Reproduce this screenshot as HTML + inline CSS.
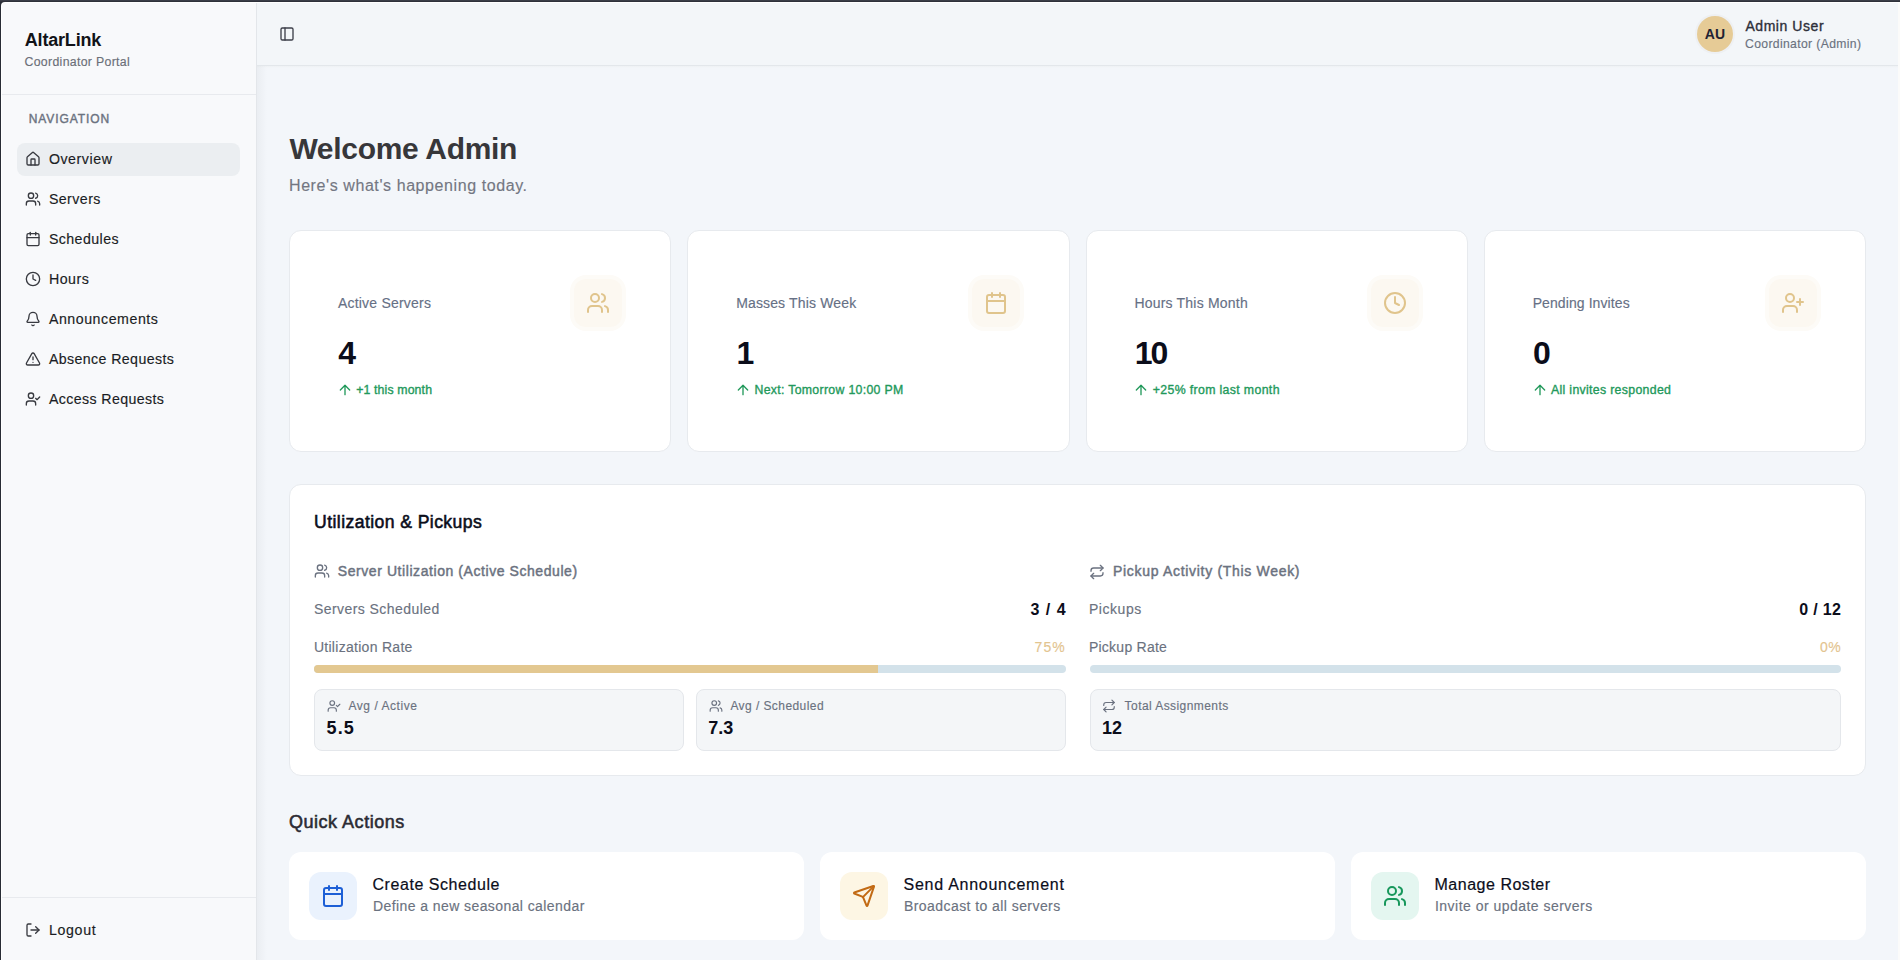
<!DOCTYPE html>
<html><head><meta charset="utf-8">
<style>
*{box-sizing:border-box;margin:0;padding:0}
html,body{width:1900px;height:960px;overflow:hidden;background:#2b2f37;font-family:"Liberation Sans",sans-serif;position:relative}
.b{position:absolute}
svg{position:absolute;fill:none;stroke:currentColor;stroke-width:2;stroke-linecap:round;stroke-linejoin:round;overflow:visible}
.t{position:absolute;white-space:nowrap;line-height:1}
.card{position:absolute;background:#fff;border:1px solid #e7eaee;border-radius:12px}
.sb{position:absolute;background:#f4f6f8;border:1px solid #e4e7eb;border-radius:8px;top:689px;height:62px}
.ib{position:absolute;width:48px;height:48px;border-radius:12px;top:279px;background:#fcf8f1;box-shadow:0 0 0 4px #fdfbf7}
.qa{position:absolute;background:#fff;border-radius:12px;top:852px;width:515px;height:88px}
.qib{position:absolute;width:48px;height:48px;border-radius:12px;top:872px}
.bar{position:absolute;height:8px;border-radius:4px;top:665px;background:#d3e2ea}
</style></head><body>
<!-- frame -->
<div class="b" style="left:0;top:0;width:1900px;height:1px;background:#3a3d47"></div>
<div class="b" style="left:0;top:1px;width:1900px;height:1px;background:#2e313a"></div>
<div class="b" style="left:0;top:2px;width:1px;height:958px;background:#282c35"></div>
<div class="b" style="left:1px;top:2px;width:1899px;height:958px;background:#fff;border-top-left-radius:4px"></div>
<div class="b" style="left:2px;top:3px;width:254px;height:957px;background:#f8f9fb;border-top-left-radius:3px"></div>
<div class="b" style="left:256px;top:3px;width:1px;height:957px;background:#e3e6ea"></div>
<div class="b" style="left:257px;top:3px;width:1641px;height:957px;background:#f3f6fa"></div>
<div class="b" style="left:257px;top:3px;width:1641px;height:62px;background:#f3f6f9"></div>
<div class="b" style="left:257px;top:65px;width:1641px;height:1px;background:#e3e7eb"></div>
<div class="b" style="left:257px;top:66px;width:1641px;height:2px;background:linear-gradient(#eef1f4,#f3f6fa)"></div>
<div class="b" style="left:257px;top:66px;width:10px;height:894px;background:linear-gradient(90deg,rgba(40,50,60,0.045),rgba(40,50,60,0))"></div>
<div class="b" style="left:1898px;top:3px;width:2px;height:957px;background:#fbfbfa"></div>

<!-- sidebar -->
<div class="b" style="left:2px;top:94px;width:254px;height:1px;background:#e8eaee"></div>
<div class="b" style="left:2px;top:897px;width:254px;height:1px;background:#e8eaee"></div>
<div class="b" style="left:17px;top:143px;width:223px;height:33px;border-radius:8px;background:#ebeef1"></div>
<div style="color:#383a40">
<svg style="left:24.5px;top:150.5px" width="16" height="16" viewBox="0 0 24 24"><path d="M15 21v-8a1 1 0 0 0-1-1h-4a1 1 0 0 0-1 1v8"/><path d="M3 10a2 2 0 0 1 .709-1.528l7-5.999a2 2 0 0 1 2.582 0l7 5.999A2 2 0 0 1 21 10v9a2 2 0 0 1-2 2H5a2 2 0 0 1-2-2z"/></svg>
<svg style="left:24.5px;top:190.5px" width="16" height="16" viewBox="0 0 24 24"><path d="M16 21v-2a4 4 0 0 0-4-4H6a4 4 0 0 0-4 4v2"/><circle cx="9" cy="7" r="4"/><path d="M22 21v-2a4 4 0 0 0-3-3.87"/><path d="M16 3.13a4 4 0 0 1 0 7.75"/></svg>
<svg style="left:24.5px;top:230.5px" width="16" height="16" viewBox="0 0 24 24"><path d="M8 2v4"/><path d="M16 2v4"/><rect width="18" height="18" x="3" y="4" rx="2"/><path d="M3 10h18"/></svg>
<svg style="left:24.5px;top:270.5px" width="16" height="16" viewBox="0 0 24 24"><circle cx="12" cy="12" r="10"/><polyline points="12 6 12 12 16 14"/></svg>
<svg style="left:24.5px;top:310.5px" width="16" height="16" viewBox="0 0 24 24"><path d="M10.268 21a2 2 0 0 0 3.464 0"/><path d="M3.262 15.326A1 1 0 0 0 4 17h16a1 1 0 0 0 .74-1.673C19.41 13.956 18 12.499 18 8A6 6 0 0 0 6 8c0 4.499-1.411 5.956-2.738 7.326"/></svg>
<svg style="left:24.5px;top:350.5px" width="16" height="16" viewBox="0 0 24 24"><path d="m21.73 18-8-14a2 2 0 0 0-3.48 0l-8 14A2 2 0 0 0 4 21h16a2 2 0 0 0 1.73-3"/><path d="M12 9v4"/><path d="M12 17h.01"/></svg>
<svg style="left:24.5px;top:390.5px" width="16" height="16" viewBox="0 0 24 24"><path d="m16 11 2 2 4-4"/><path d="M16 21v-2a4 4 0 0 0-4-4H6a4 4 0 0 0-4 4v2"/><circle cx="9" cy="7" r="4"/></svg>
<svg style="left:24.7px;top:921.7px" width="16" height="16" viewBox="0 0 24 24"><path d="m16 17 5-5-5-5"/><path d="M21 12H9"/><path d="M9 21H5a2 2 0 0 1-2-2V5a2 2 0 0 1 2-2h4"/></svg>
</div>

<!-- header -->
<svg style="left:278.7px;top:25.7px;color:#3d3f4a" width="16" height="16" viewBox="0 0 24 24"><rect width="18" height="18" x="3" y="3" rx="2"/><path d="M9 3v18"/></svg>
<div class="b" style="left:1695px;top:14px;width:40px;height:40px;border-radius:50%;background:#eef0f3"></div>
<div class="b" style="left:1697px;top:16px;width:36px;height:36px;border-radius:50%;background:#e6cb96"></div>

<!-- stat cards -->
<div class="card" style="left:289px;top:230px;width:382.25px;height:222px"></div>
<div class="card" style="left:687.25px;top:230px;width:382.25px;height:222px"></div>
<div class="card" style="left:1085.5px;top:230px;width:382.25px;height:222px"></div>
<div class="card" style="left:1483.75px;top:230px;width:382.25px;height:222px"></div>
<div class="ib" style="left:574px"></div>
<div class="ib" style="left:972.25px"></div>
<div class="ib" style="left:1370.5px"></div>
<div class="ib" style="left:1768.75px"></div>
<div style="color:#e0c48c">
<svg style="left:586px;top:291px" width="24" height="24" viewBox="0 0 24 24"><path d="M16 21v-2a4 4 0 0 0-4-4H6a4 4 0 0 0-4 4v2"/><circle cx="9" cy="7" r="4"/><path d="M22 21v-2a4 4 0 0 0-3-3.87"/><path d="M16 3.13a4 4 0 0 1 0 7.75"/></svg>
<svg style="left:984.25px;top:291px" width="24" height="24" viewBox="0 0 24 24"><path d="M8 2v4"/><path d="M16 2v4"/><rect width="18" height="18" x="3" y="4" rx="2"/><path d="M3 10h18"/></svg>
<svg style="left:1382.5px;top:291px" width="24" height="24" viewBox="0 0 24 24"><circle cx="12" cy="12" r="10"/><polyline points="12 6 12 12 16 14"/></svg>
<svg style="left:1780.75px;top:291px" width="24" height="24" viewBox="0 0 24 24"><path d="M16 21v-2a4 4 0 0 0-4-4H6a4 4 0 0 0-4 4v2"/><circle cx="9" cy="7" r="4"/><path d="M19 8v6"/><path d="M22 11h-6"/></svg>
</div>
<div style="color:#22995b">
<svg style="left:336.8px;top:382.3px" width="16" height="16" viewBox="0 0 24 24"><path d="m5 12 7-7 7 7"/><path d="M12 19V5"/></svg>
<svg style="left:735.05px;top:382.3px" width="16" height="16" viewBox="0 0 24 24"><path d="m5 12 7-7 7 7"/><path d="M12 19V5"/></svg>
<svg style="left:1133.3px;top:382.3px" width="16" height="16" viewBox="0 0 24 24"><path d="m5 12 7-7 7 7"/><path d="M12 19V5"/></svg>
<svg style="left:1531.55px;top:382.3px" width="16" height="16" viewBox="0 0 24 24"><path d="m5 12 7-7 7 7"/><path d="M12 19V5"/></svg>
</div>

<!-- utilization -->
<div class="card" style="left:289px;top:484px;width:1577px;height:292px"></div>
<div style="color:#6b7280">
<svg style="left:313.8px;top:562.9px" width="16" height="16" viewBox="0 0 24 24"><path d="M16 21v-2a4 4 0 0 0-4-4H6a4 4 0 0 0-4 4v2"/><circle cx="9" cy="7" r="4"/><path d="M22 21v-2a4 4 0 0 0-3-3.87"/><path d="M16 3.13a4 4 0 0 1 0 7.75"/></svg>
<svg style="left:1089.2px;top:563.5px" width="16" height="16" viewBox="0 0 24 24"><path d="m17 2 4 4-4 4"/><path d="M3 11v-1a4 4 0 0 1 4-4h14"/><path d="m7 22-4-4 4-4"/><path d="M21 13v1a4 4 0 0 1-4 4H3"/></svg>
</div>
<div class="bar" style="left:314px;width:751.5px"></div>
<div class="bar" style="left:314px;width:564px;background:#e3c891;border-radius:4px 0 0 4px"></div>
<div class="bar" style="left:1089.5px;width:751.5px"></div>
<div class="sb" style="left:314px;width:369.75px"></div>
<div class="sb" style="left:695.75px;width:369.75px"></div>
<div class="sb" style="left:1089.5px;width:751.5px"></div>
<div style="color:#6b7280">
<svg style="left:326.9px;top:698.7px" width="14" height="14" viewBox="0 0 24 24"><path d="m16 11 2 2 4-4"/><path d="M16 21v-2a4 4 0 0 0-4-4H6a4 4 0 0 0-4 4v2"/><circle cx="9" cy="7" r="4"/></svg>
<svg style="left:708.65px;top:698.7px" width="14" height="14" viewBox="0 0 24 24"><path d="M16 21v-2a4 4 0 0 0-4-4H6a4 4 0 0 0-4 4v2"/><circle cx="9" cy="7" r="4"/><path d="M22 21v-2a4 4 0 0 0-3-3.87"/><path d="M16 3.13a4 4 0 0 1 0 7.75"/></svg>
<svg style="left:1102.4px;top:699.4px" width="14" height="14" viewBox="0 0 24 24"><path d="m17 2 4 4-4 4"/><path d="M3 11v-1a4 4 0 0 1 4-4h14"/><path d="m7 22-4-4 4-4"/><path d="M21 13v1a4 4 0 0 1-4 4H3"/></svg>
</div>

<!-- quick actions -->
<div class="qa" style="left:289px"></div>
<div class="qa" style="left:820px"></div>
<div class="qa" style="left:1351px"></div>
<div class="qib" style="left:309px;background:#eaf2fd"></div>
<div class="qib" style="left:840px;background:#fdf6e4"></div>
<div class="qib" style="left:1371px;background:#e4f6f0"></div>
<svg style="left:321px;top:884px;color:#1d5fd6" width="24" height="24" viewBox="0 0 24 24"><path d="M8 2v4"/><path d="M16 2v4"/><rect width="18" height="18" x="3" y="4" rx="2"/><path d="M3 10h18"/></svg>
<svg style="left:852px;top:884px;color:#c26a14" width="24" height="24" viewBox="0 0 24 24"><path d="M14.536 21.686a.5.5 0 0 0 .937-.024l6.5-19a.496.496 0 0 0-.635-.635l-19 6.5a.5.5 0 0 0-.024.937l7.93 3.18a2 2 0 0 1 1.112 1.11z"/><path d="m21.854 2.147-10.94 10.939"/></svg>
<svg style="left:1383px;top:884px;color:#17975b" width="24" height="24" viewBox="0 0 24 24"><path d="M16 21v-2a4 4 0 0 0-4-4H6a4 4 0 0 0-4 4v2"/><circle cx="9" cy="7" r="4"/><path d="M22 21v-2a4 4 0 0 0-3-3.87"/><path d="M16 3.13a4 4 0 0 1 0 7.75"/></svg>

<!-- texts -->
<div class="t" style="top:30.56px;font-size:18px;font-weight:700;color:#111318;letter-spacing:-0.189px;left:24.80px">AltarLink</div>
<div class="t" style="top:55.89px;font-size:12.3px;font-weight:400;color:#6b6f78;letter-spacing:0.318px;-webkit-text-stroke:0.15px #6b6f78;left:24.50px">Coordinator Portal</div>
<div class="t" style="top:112.94px;font-size:12px;font-weight:400;color:#6b7280;letter-spacing:0.930px;-webkit-text-stroke:0.4px #6b7280;left:28.70px">NAVIGATION</div>
<div class="t" style="top:151.88px;font-size:14.2px;font-weight:400;color:#1b1d24;letter-spacing:0.551px;-webkit-text-stroke:0.15px #1b1d24;left:48.90px">Overview</div>
<div class="t" style="top:191.88px;font-size:14.2px;font-weight:400;color:#1b1d24;letter-spacing:0.435px;-webkit-text-stroke:0.15px #1b1d24;left:48.90px">Servers</div>
<div class="t" style="top:231.88px;font-size:14.2px;font-weight:400;color:#1b1d24;letter-spacing:0.429px;-webkit-text-stroke:0.15px #1b1d24;left:48.90px">Schedules</div>
<div class="t" style="top:271.88px;font-size:14.2px;font-weight:400;color:#1b1d24;letter-spacing:0.535px;-webkit-text-stroke:0.15px #1b1d24;left:48.90px">Hours</div>
<div class="t" style="top:311.88px;font-size:14.2px;font-weight:400;color:#1b1d24;letter-spacing:0.538px;-webkit-text-stroke:0.15px #1b1d24;left:48.90px">Announcements</div>
<div class="t" style="top:351.88px;font-size:14.2px;font-weight:400;color:#1b1d24;letter-spacing:0.394px;-webkit-text-stroke:0.15px #1b1d24;left:48.90px">Absence Requests</div>
<div class="t" style="top:391.88px;font-size:14.2px;font-weight:400;color:#1b1d24;letter-spacing:0.385px;-webkit-text-stroke:0.15px #1b1d24;left:48.90px">Access Requests</div>
<div class="t" style="top:923.28px;font-size:14.2px;font-weight:400;color:#1b1d24;letter-spacing:0.679px;-webkit-text-stroke:0.15px #1b1d24;left:48.90px">Logout</div>
<div class="t" style="top:27.05px;font-size:14px;font-weight:700;color:#1f2233;letter-spacing:0.166px;left:1704.70px">AU</div>
<div class="t" style="top:18.95px;font-size:14px;font-weight:400;color:#2d2f3a;letter-spacing:0.562px;-webkit-text-stroke:0.35px #2d2f3a;left:1745.40px">Admin User</div>
<div class="t" style="top:37.57px;font-size:12.2px;font-weight:400;color:#6b7280;letter-spacing:0.348px;-webkit-text-stroke:0.15px #6b7280;left:1745.00px">Coordinator (Admin)</div>
<div class="t" style="top:133.50px;font-size:30px;font-weight:700;color:#37373a;letter-spacing:-0.310px;left:289.40px">Welcome Admin</div>
<div class="t" style="top:178.45px;font-size:16px;font-weight:400;color:#737782;letter-spacing:0.584px;-webkit-text-stroke:0.15px #737782;left:289.00px">Here&#x27;s what&#x27;s happening today.</div>
<div class="t" style="top:296.15px;font-size:14px;font-weight:400;color:#667085;letter-spacing:0.212px;-webkit-text-stroke:0.15px #667085;left:337.90px">Active Servers</div>
<div class="t" style="top:337.11px;font-size:32px;font-weight:700;color:#0b0d1a;letter-spacing:0.000px;left:338.30px">4</div>
<div class="t" style="top:384.09px;font-size:12.3px;font-weight:400;color:#22995b;letter-spacing:0.136px;-webkit-text-stroke:0.35px #22995b;left:356.20px">+1 this month</div>
<div class="t" style="top:296.15px;font-size:14px;font-weight:400;color:#667085;letter-spacing:0.150px;-webkit-text-stroke:0.15px #667085;left:736.15px">Masses This Week</div>
<div class="t" style="top:337.11px;font-size:32px;font-weight:700;color:#0b0d1a;letter-spacing:0.000px;left:736.55px">1</div>
<div class="t" style="top:384.09px;font-size:12.3px;font-weight:400;color:#22995b;letter-spacing:0.312px;-webkit-text-stroke:0.35px #22995b;left:754.45px">Next: Tomorrow 10:00 PM</div>
<div class="t" style="top:296.15px;font-size:14px;font-weight:400;color:#667085;letter-spacing:0.204px;-webkit-text-stroke:0.15px #667085;left:1134.40px">Hours This Month</div>
<div class="t" style="top:337.11px;font-size:32px;font-weight:700;color:#0b0d1a;letter-spacing:-2.200px;left:1134.80px">10</div>
<div class="t" style="top:384.09px;font-size:12.3px;font-weight:400;color:#22995b;letter-spacing:0.360px;-webkit-text-stroke:0.35px #22995b;left:1152.70px">+25% from last month</div>
<div class="t" style="top:296.15px;font-size:14px;font-weight:400;color:#667085;letter-spacing:0.090px;-webkit-text-stroke:0.15px #667085;left:1532.65px">Pending Invites</div>
<div class="t" style="top:337.11px;font-size:32px;font-weight:700;color:#0b0d1a;letter-spacing:0.000px;left:1533.05px">0</div>
<div class="t" style="top:384.09px;font-size:12.3px;font-weight:400;color:#22995b;letter-spacing:0.326px;-webkit-text-stroke:0.35px #22995b;left:1550.95px">All invites responded</div>
<div class="t" style="top:513.80px;font-size:17.6px;font-weight:400;color:#0b0d1a;letter-spacing:0.415px;-webkit-text-stroke:0.55px #0b0d1a;left:314.10px">Utilization &amp; Pickups</div>
<div class="t" style="top:563.75px;font-size:14px;font-weight:400;color:#6b7280;letter-spacing:0.568px;-webkit-text-stroke:0.45px #6b7280;left:337.80px">Server Utilization (Active Schedule)</div>
<div class="t" style="top:563.75px;font-size:14px;font-weight:400;color:#6b7280;letter-spacing:0.690px;-webkit-text-stroke:0.45px #6b7280;left:1113.00px">Pickup Activity (This Week)</div>
<div class="t" style="top:601.95px;font-size:14px;font-weight:400;color:#6b7280;letter-spacing:0.438px;-webkit-text-stroke:0.15px #6b7280;left:313.90px">Servers Scheduled</div>
<div class="t" style="top:601.85px;font-size:16px;font-weight:700;color:#0b0d1a;letter-spacing:0.965px;right:833.44px">3 / 4</div>
<div class="t" style="top:639.95px;font-size:14px;font-weight:400;color:#6b7280;letter-spacing:0.290px;-webkit-text-stroke:0.15px #6b7280;left:313.90px">Utilization Rate</div>
<div class="t" style="top:639.75px;font-size:14px;font-weight:400;color:#e3c48f;letter-spacing:1.084px;-webkit-text-stroke:0.15px #e3c48f;right:834.12px">75%</div>
<div class="t" style="top:601.95px;font-size:14px;font-weight:400;color:#6b7280;letter-spacing:0.561px;-webkit-text-stroke:0.15px #6b7280;left:1088.90px">Pickups</div>
<div class="t" style="top:601.85px;font-size:16px;font-weight:700;color:#0b0d1a;letter-spacing:0.294px;right:58.91px">0 / 12</div>
<div class="t" style="top:639.95px;font-size:14px;font-weight:400;color:#6b7280;letter-spacing:0.252px;-webkit-text-stroke:0.15px #6b7280;left:1088.90px">Pickup Rate</div>
<div class="t" style="top:639.75px;font-size:14px;font-weight:400;color:#e3c48f;letter-spacing:0.300px;-webkit-text-stroke:0.15px #e3c48f;right:59.10px">0%</div>
<div class="t" style="top:699.64px;font-size:12px;font-weight:400;color:#6b7280;letter-spacing:0.538px;-webkit-text-stroke:0.15px #6b7280;left:348.50px">Avg / Active</div>
<div class="t" style="top:719.16px;font-size:18px;font-weight:700;color:#0b0d1a;letter-spacing:1.084px;left:326.60px">5.5</div>
<div class="t" style="top:699.64px;font-size:12px;font-weight:400;color:#6b7280;letter-spacing:0.429px;-webkit-text-stroke:0.15px #6b7280;left:730.40px">Avg / Scheduled</div>
<div class="t" style="top:719.16px;font-size:18px;font-weight:700;color:#0b0d1a;letter-spacing:0.000px;left:708.35px">7.3</div>
<div class="t" style="top:699.64px;font-size:12px;font-weight:400;color:#6b7280;letter-spacing:0.430px;-webkit-text-stroke:0.15px #6b7280;left:1124.60px">Total Assignments</div>
<div class="t" style="top:719.16px;font-size:18px;font-weight:700;color:#0b0d1a;letter-spacing:0.000px;left:1102.10px">12</div>
<div class="t" style="top:812.56px;font-size:18px;font-weight:400;color:#2b2b33;letter-spacing:0.513px;-webkit-text-stroke:0.55px #2b2b33;left:289.00px">Quick Actions</div>
<div class="t" style="top:876.55px;font-size:16px;font-weight:400;color:#0b0d1a;letter-spacing:0.551px;-webkit-text-stroke:0.2px #0b0d1a;left:372.50px">Create Schedule</div>
<div class="t" style="top:899.15px;font-size:14px;font-weight:400;color:#6b7280;letter-spacing:0.416px;-webkit-text-stroke:0.15px #6b7280;left:373.00px">Define a new seasonal calendar</div>
<div class="t" style="top:876.55px;font-size:16px;font-weight:400;color:#0b0d1a;letter-spacing:0.740px;-webkit-text-stroke:0.2px #0b0d1a;left:903.50px">Send Announcement</div>
<div class="t" style="top:899.15px;font-size:14px;font-weight:400;color:#6b7280;letter-spacing:0.431px;-webkit-text-stroke:0.15px #6b7280;left:904.00px">Broadcast to all servers</div>
<div class="t" style="top:876.55px;font-size:16px;font-weight:400;color:#0b0d1a;letter-spacing:0.517px;-webkit-text-stroke:0.2px #0b0d1a;left:1434.50px">Manage Roster</div>
<div class="t" style="top:899.15px;font-size:14px;font-weight:400;color:#6b7280;letter-spacing:0.474px;-webkit-text-stroke:0.15px #6b7280;left:1435.00px">Invite or update servers</div></body></html>
